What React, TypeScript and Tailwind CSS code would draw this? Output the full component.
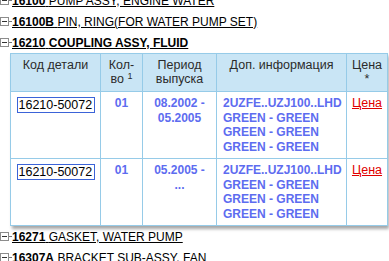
import React from "react";

type Part = { code: string; period: string[]; info: string[] };

const parts: Part[] = [
  {
    code: "16210-50072",
    period: ["08.2002 -", "05.2005"],
    info: ["2UZFE..UZJ100..LHD", "GREEN - GREEN", "GREEN - GREEN", "GREEN - GREEN"],
  },
  {
    code: "16210-50072",
    period: ["05.2005 -", "..."],
    info: ["2UZFE..UZJ100..LHD", "GREEN - GREEN", "GREEN - GREEN", "GREEN - GREEN"],
  },
];

function TreeIcon() {
  return (
    <span className="inline-flex items-center shrink-0 w-[11px]">
      <span className="relative w-[9px] h-[9px] border border-[#8c8c8c] bg-white">
        <span className="absolute left-[1px] right-[1px] top-[3px] h-[1px] bg-[#333]" />
      </span>
      <span className="w-[2px] border-t border-dotted border-[#777]" />
    </span>
  );
}

function TreeRow({
  code,
  name,
  underline,
  boldAll,
}: {
  code: string;
  name: string;
  underline: boolean;
  boldAll?: boolean;
}) {
  return (
    <div className="flex items-center h-[21px] whitespace-nowrap">
      <TreeIcon />
      <span className={`ml-[1px] text-[12px] text-black ${underline ? "underline" : ""}`}>
        <b className="font-bold">{code}</b>{" "}
        <span className={boldAll ? "font-bold" : ""}>{name}</span>
      </span>
    </div>
  );
}

export default function App() {
  return (
    <div className="w-[389px] h-[261px] overflow-hidden bg-white font-['Liberation_Sans',Arial,sans-serif]">
      <div className="-mt-[10px]">
        <TreeRow code="16100" name="PUMP ASSY, ENGINE WATER" underline />
        <TreeRow code="16100B" name="PIN, RING(FOR WATER PUMP SET)" underline />
        <TreeRow code="16210" name="COUPLING ASSY, FLUID" underline boldAll />
        <div className="ml-[10px] w-[377px] shadow-[2px_3px_3px_rgba(0,0,0,0.35)]">
          <table className="w-[377px] border-collapse table-fixed">
            <colgroup>
              <col className="w-[90px]" />
              <col className="w-[42px]" />
              <col className="w-[74px]" />
              <col className="w-[130px]" />
              <col className="w-[41px]" />
            </colgroup>
            <thead>
              <tr className="h-[38px] bg-[#c9e5f5] text-[12.5px] leading-[14px] text-[#2b2b2b] align-top">
                <th className="border border-[#96cbe8] font-normal pt-[4px]">Код детали</th>
                <th className="border border-[#96cbe8] font-normal pt-[4px] px-[4px]">
                  Кол-
                  <br />
                  во <sup className="text-[9px]">1</sup>
                </th>
                <th className="border border-[#96cbe8] font-normal pt-[4px]">
                  Период
                  <br />
                  выпуска
                </th>
                <th className="border border-[#96cbe8] font-normal pt-[4px]">Доп. информация</th>
                <th className="border border-[#96cbe8] font-normal pt-[4px]">
                  Цена
                  <br />*
                </th>
              </tr>
            </thead>
            <tbody>
              {parts.map((p, i) => (
                <tr key={i} className="h-[67px] align-top bg-white">
                  <td className="border border-[#96cbe8] pt-[4px] text-center">
                    <span className="inline-block w-[78px] h-[16px] overflow-hidden whitespace-nowrap border border-[#3b63d8] text-[12.5px] leading-[14px] text-black text-left pl-[1px]">
                      {p.code}
                    </span>
                  </td>
                  <td className="border border-[#96cbe8] pt-[4px] text-center text-[12px] leading-[15px] font-bold text-[#5d6cf0]">
                    01
                  </td>
                  <td className="border border-[#96cbe8] pt-[4px] text-center text-[12px] leading-[15px] font-bold text-[#5d6cf0]">
                    {p.period.map((l, j) => (
                      <div key={j}>{l}</div>
                    ))}
                  </td>
                  <td className="border border-[#96cbe8] pt-[4px] pl-[6px] text-[12px] leading-[14.5px] font-bold text-[#5d6cf0] whitespace-nowrap">
                    {p.info.map((l, j) => (
                      <div key={j}>{l}</div>
                    ))}
                  </td>
                  <td className="border border-[#96cbe8] pt-[4px] text-center text-[12.5px] leading-[15px]">
                    <a className="text-[#e00000] underline" href="#">
                      Цена
                    </a>
                  </td>
                </tr>
              ))}
            </tbody>
          </table>
        </div>
        <TreeRow code="16271" name="GASKET, WATER PUMP" underline />
        <TreeRow code="16307A" name="BRACKET SUB-ASSY, FAN" underline={false} />
      </div>
    </div>
  );
}
